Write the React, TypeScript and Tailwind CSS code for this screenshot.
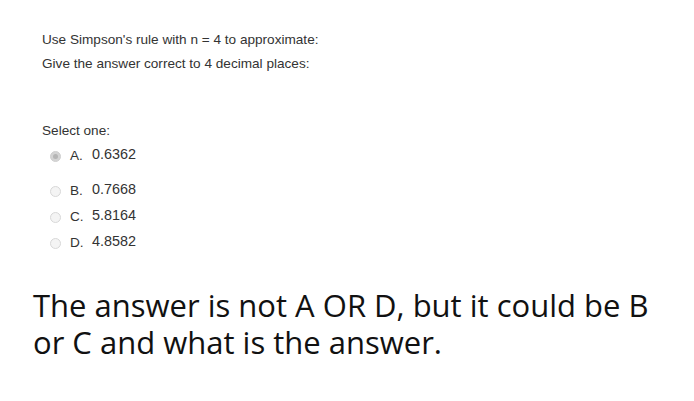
import React from "react";

const options = [
  { letter: "A.", value: "0.6362", checked: true },
  { letter: "B.", value: "0.7668", checked: false },
  { letter: "C.", value: "5.8164", checked: false },
  { letter: "D.", value: "4.8582", checked: false },
];

const Radio = ({ checked }: { checked: boolean }) =>
  checked ? (
    <span className="w-[11px] h-[11px] rounded-full bg-[#d4d4d4] border border-[#cfcfcf] flex items-center justify-center">
      <span className="w-[5px] h-[5px] rounded-full bg-[#b5b5b5]" />
    </span>
  ) : (
    <span className="w-[11px] h-[11px] rounded-full bg-[#f4f4f4] border border-[#d8d8d8]" />
  );

export default function App() {
  return (
    <div className="w-[694px] h-[401px] bg-white relative overflow-hidden">
      <div className="pt-[31px] pl-[42px] text-[13.6px] text-[#333] font-['Liberation_Sans',Arial,sans-serif]">
        <p className="leading-[17px]">Use Simpson's rule with n = 4 to approximate:</p>
        <p className="leading-[17px] mt-[7px]">Give the answer correct to 4 decimal places:</p>

        <p className="mt-[50px] leading-[17px]">Select one:</p>
        <div className="mt-[4px] pl-[8px] flex flex-col">
          {options.map((o, i) => (
            <div
              key={o.letter}
              className={`flex items-center h-[26px] ${i === 1 ? "mt-[9px]" : ""}`}
            >
              <Radio checked={o.checked} />
              <span className="ml-[9px] w-[22px]">{o.letter}</span>
              <span className="-mt-[3px] text-[14.4px]">{o.value}</span>
            </div>
          ))}
        </div>
      </div>

      <div className="pl-[33px] pt-[31px] text-[31px] leading-[37px] text-[#111] font-['Open_Sans','Noto_Sans',sans-serif]">
        <p>The answer is not A OR D, but it could be B</p>
        <p>or C and what is the answer.</p>
      </div>
    </div>
  );
}
